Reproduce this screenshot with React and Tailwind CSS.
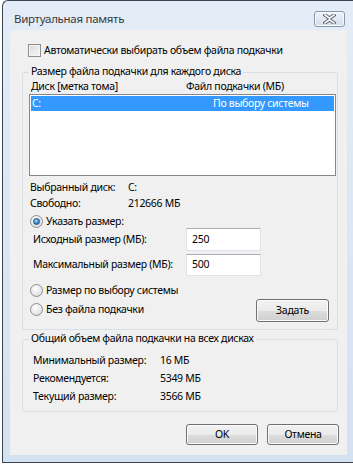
import React from "react";

const btn =
  "flex items-center justify-center rounded-[3px] border border-[#707070] bg-[linear-gradient(to_bottom,#f2f2f2_0%,#ebebeb_50%,#dddddd_51%,#cfcfcf_100%)] shadow-[inset_0_0_0_1px_#fbfbfb] text-black";

function Radio({ checked }) {
  return (
    <span className="flex h-[13px] w-[13px] shrink-0 items-center justify-center rounded-full border border-[#8e8f8f] bg-[radial-gradient(circle_at_40%_35%,#ffffff_0%,#e6e6e6_60%,#cfcfcf_100%)]">
      {checked && (
        <span className="h-[7px] w-[7px] rounded-full border border-[#1b4d7a] bg-[radial-gradient(circle_at_40%_35%,#9fe0ff_0%,#3a8fd0_55%,#1a5b93_100%)]" />
      )}
    </span>
  );
}

function CloseButton() {
  return (
    <div className="mt-[10px] mr-[8px] ml-auto flex h-[16px] w-[31px] items-center justify-center rounded-[3px] border border-[#8a97aa] bg-[linear-gradient(to_bottom,#eef3f9,#d3deec)] shadow-[inset_0_0_0_1px_#f6f9fc]">
      <svg width="13" height="10" viewBox="0 0 13 10">
        <path
          d="M2 1 L6.5 4.2 L11 1 M2 9 L6.5 5.8 L11 9"
          stroke="#525a66"
          strokeWidth="3.4"
          fill="none"
          strokeLinecap="square"
        />
        <path
          d="M2 1 L6.5 4.2 L11 1 M2 9 L6.5 5.8 L11 9"
          stroke="#ffffff"
          strokeWidth="1.6"
          fill="none"
          strokeLinecap="square"
        />
      </svg>
    </div>
  );
}

export default function App() {
  return (
    <div
      className="h-[465px] w-[353px] overflow-hidden whitespace-nowrap bg-white pl-[2px] text-[10.5px] tracking-[-0.3px] text-black"
      style={{ fontFamily: '"Noto Sans", "Open Sans", sans-serif' }}
    >
      <div className="h-[463px] w-[351px] rounded-tl-[6px] border-t border-b border-l border-[#3b4452] bg-[linear-gradient(to_bottom,#e3ecf7,#d4e1f1)]">
        {/* title bar */}
        <div className="flex h-[29px] items-start">
          <div className="mt-[10px] pl-[11px] text-[11.5px] leading-[16px] tracking-[-0.3px] text-[#3a3a3a]">
            Виртуальная память
          </div>
          <CloseButton />
        </div>

        {/* client area */}
        <div className="ml-[7px] h-[425px] w-[337px] overflow-hidden bg-[#f0f0f0] pt-[13px]">
          <div className="flex h-[15px] items-center pl-[18px]">
            <span className="h-[13px] w-[13px] shrink-0 border border-[#8e8f8f] bg-[linear-gradient(135deg,#dcdcdc,#f6f6f6)] shadow-[inset_0_0_0_1px_#f4f4f4]" />
            <span className="ml-[3px] leading-[15px]">
              Автоматически выбирать объем файла подкачки
            </span>
          </div>

          {/* per-disk group */}
          <div className="relative mt-[14px] ml-[12px] h-[258px] w-[316px] rounded-[3px] border border-[#d5dfe5]">
            <div className="absolute top-[-10px] left-[6px] bg-[#f0f0f0] px-[2px] leading-[16px]">
              Размер файла подкачки для каждого диска
            </div>
            <div className="mt-[6px] flex h-[15px] pl-[8px] leading-[15px]">
              <span className="w-[155px]">Диск [метка тома]</span>
              <span>Файл подкачки (МБ)</span>
            </div>
            <div className="ml-[6px] h-[82px] w-[307px] border border-[#828790] bg-white p-[1px]">
              <div className="flex h-[15px] items-center bg-[#3399ff] pl-[1px] leading-[15px] text-white">
                <span className="w-[181px]">C:</span>
                <span>По выбору системы</span>
              </div>
            </div>

            <div className="mt-[3px] pl-[7px] leading-[16px]">
              <div className="flex">
                <span className="w-[98px]">Выбранный диск:</span>
                <span>C:</span>
              </div>
              <div className="flex">
                <span className="w-[98px]">Свободно:</span>
                <span>212666 МБ</span>
              </div>
            </div>

            <div className="mt-[4px] flex h-[13px] items-center pl-[7px]">
              <Radio checked />
              <span className="ml-[3px] leading-[15px]">Указать размер:</span>
            </div>

            <div className="flex h-[23px] items-center pl-[10px]">
              <span className="w-[153px]">Исходный размер (МБ):</span>
              <div className="flex h-[23px] w-[75px] items-center border border-[#e2e3ea] border-t-[#abadb3] bg-white pl-[5px]">
                250
              </div>
            </div>
            <div className="mt-[3px] flex h-[22px] items-center pl-[10px]">
              <span className="w-[153px]">Максимальный размер (МБ):</span>
              <div className="flex h-[22px] w-[75px] items-center border border-[#e2e3ea] border-t-[#abadb3] bg-white pl-[5px]">
                500
              </div>
            </div>

            <div className="mt-[7px] flex h-[14px] items-center pl-[7px]">
              <Radio />
              <span className="ml-[3px] leading-[15px]">Размер по выбору системы</span>
            </div>

            <div className="mt-[2px] flex h-[23px] items-start">
              <div className="flex h-[20px] items-center pl-[7px]">
                <Radio />
                <span className="ml-[3px] leading-[15px]">Без файла подкачки</span>
              </div>
              <div className={`${btn} mr-[8px] ml-auto h-[23px] w-[73px]`}>Задать</div>
            </div>
          </div>

          {/* totals group */}
          <div className="relative mt-[9px] ml-[12px] h-[73px] w-[316px] rounded-[3px] border border-[#d5dfe5] pt-[11px] pl-[10px] leading-[18px]">
            <div className="absolute top-[-10px] left-[6px] bg-[#f0f0f0] px-[2px] leading-[16px]">
              Общий объем файла подкачки на всех дисках
            </div>
            <div className="flex">
              <span className="w-[127px]">Минимальный размер:</span>
              <span>16 МБ</span>
            </div>
            <div className="flex">
              <span className="w-[127px]">Рекомендуется:</span>
              <span>5349 МБ</span>
            </div>
            <div className="flex">
              <span className="w-[127px]">Текущий размер:</span>
              <span>3566 МБ</span>
            </div>
          </div>

          <div className="mt-[12px] flex justify-end gap-[9px] pr-[8px]">
            <div className={`${btn} h-[21px] w-[72px]`}>OK</div>
            <div className={`${btn} h-[21px] w-[72px]`}>Отмена</div>
          </div>
        </div>
      </div>
    </div>
  );
}
